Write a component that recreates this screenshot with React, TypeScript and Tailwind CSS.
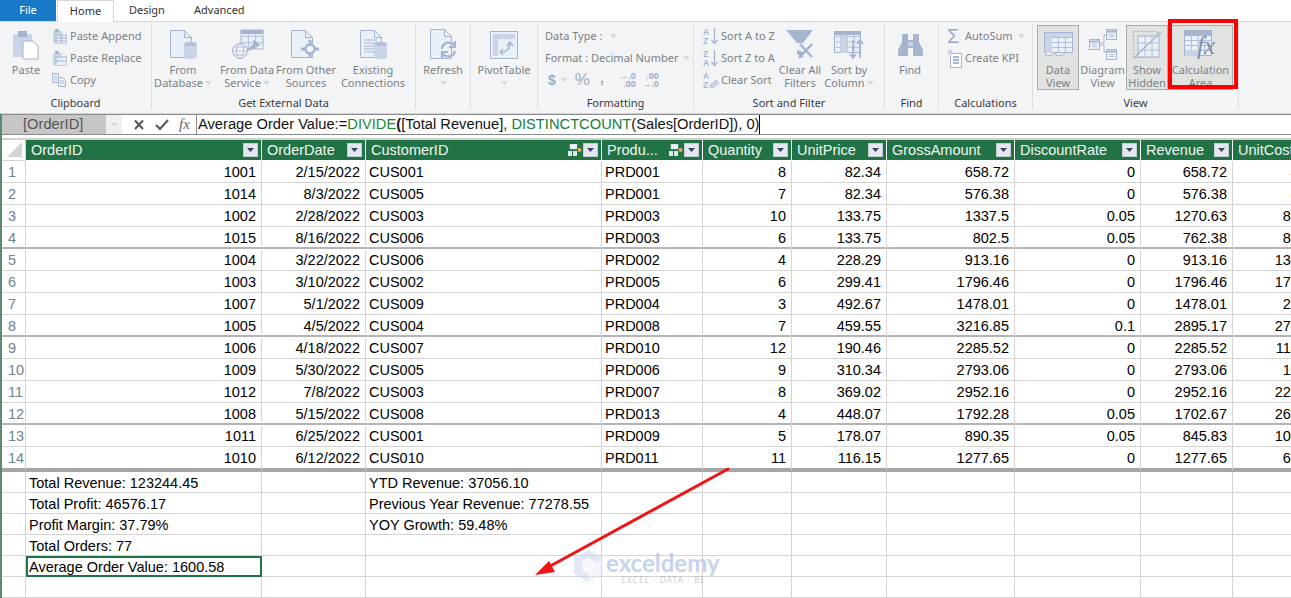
import type { ReactNode } from 'react';

const D = '#a6b4ce';
const M = '#c9d4e7';
const L = '#eaf0f8';

const cols = 'grid grid-cols-[24px_236px_104px_236px_101px_89px_95px_128px_126px_92px_92px]';

const rows = [
  ['1', '1001', '2/15/2022', 'CUS001', 'PRD001', '8', '82.34', '658.72', '0', '658.72', '49.4'],
  ['2', '1014', '8/3/2022', 'CUS005', 'PRD001', '7', '82.34', '576.38', '0', '576.38', '49.4'],
  ['3', '1002', '2/28/2022', 'CUS003', 'PRD003', '10', '133.75', '1337.5', '0.05', '1270.63', '80.25'],
  ['4', '1015', '8/16/2022', 'CUS006', 'PRD003', '6', '133.75', '802.5', '0.05', '762.38', '80.25'],
  ['5', '1004', '3/22/2022', 'CUS006', 'PRD002', '4', '228.29', '913.16', '0', '913.16', '137.37'],
  ['6', '1003', '3/10/2022', 'CUS002', 'PRD005', '6', '299.41', '1796.46', '0', '1796.46', '179.65'],
  ['7', '1007', '5/1/2022', 'CUS009', 'PRD004', '3', '492.67', '1478.01', '0', '1478.01', '29.56'],
  ['8', '1005', '4/5/2022', 'CUS004', 'PRD008', '7', '459.55', '3216.85', '0.1', '2895.17', '275.73'],
  ['9', '1006', '4/18/2022', 'CUS007', 'PRD010', '12', '190.46', '2285.52', '0', '2285.52', '114.28'],
  ['10', '1009', '5/30/2022', 'CUS005', 'PRD006', '9', '310.34', '2793.06', '0', '2793.06', '18.62'],
  ['11', '1012', '7/8/2022', 'CUS003', 'PRD007', '8', '369.02', '2952.16', '0', '2952.16', '221.41'],
  ['12', '1008', '5/15/2022', 'CUS008', 'PRD013', '4', '448.07', '1792.28', '0.05', '1702.67', '268.84'],
  ['13', '1011', '6/25/2022', 'CUS001', 'PRD009', '5', '178.07', '890.35', '0.05', '845.83', '106.84'],
  ['14', '1010', '6/12/2022', 'CUS010', 'PRD011', '11', '116.15', '1277.65', '0', '1277.65', '69.69'],
];

const headers = ['OrderID', 'OrderDate', 'CustomerID', 'Produ...', 'Quantity', 'UnitPrice', 'GrossAmount', 'DiscountRate', 'Revenue', 'UnitCost'];

const measures = [
  ['Total Revenue: 123244.45', 'YTD Revenue: 37056.10'],
  ['Total Profit: 46576.17', 'Previous Year Revenue: 77278.55'],
  ['Profit Margin: 37.79%', 'YOY Growth: 59.48%'],
  ['Total Orders: 77', ''],
  ['Average Order Value: 1600.58', ''],
  ['', ''],
];

function Caret({ className = '' }: { className?: string }) {
  return (
    <svg width="7" height="4" viewBox="0 0 7 4" className={className}>
      <path d="M0 0h7L3.500 4z" fill="#d6d9de" />
    </svg>
  );
}

function Big({ icon, lines, w, active, caret }: { icon: ReactNode; lines: string[]; w: string; active?: boolean; caret?: boolean }) {
  return (
    <div className={`${w} mt-[2px] h-[65px] flex flex-col items-center border whitespace-nowrap ${active ? 'bg-[#e1e3e1] border-[#a9aca9]' : 'border-transparent'}`}>
      <div className="h-[38px] flex items-center justify-center">{icon}</div>
      <div className="leading-[13px] text-center">{lines[0]}</div>
      <div className="leading-[13px] h-[13px] text-center flex items-center gap-[2px]">
        {lines[1] ?? ''}
        {caret && <Caret />}
      </div>
    </div>
  );
}

function Small({ icon, label, caret }: { icon: ReactNode; label: string; caret?: boolean }) {
  return (
    <div className="h-[22px] flex items-center whitespace-nowrap">
      <div className="w-[18px] flex items-center">{icon}</div>
      {label}
      {caret && <Caret className="ml-[5px]" />}
    </div>
  );
}

function Group({ label, w, children }: { label: string; w: string; children: ReactNode }) {
  return (
    <div className={`${w} h-[86px] mt-px flex flex-col border-r border-[#dcdee1]`}>
      <div className="h-[70px] flex">{children}</div>
      <div className="pt-[4px] leading-[12px] text-center text-[#3c3c3c]">{label}</div>
    </div>
  );
}

function TinyTable({ x, y, w, h, c = 3, r = 3 }: { x: number; y: number; w: number; h: number; c?: number; r?: number }) {
  const cw = w / c;
  const rh = h / r;
  return (
    <g>
      <rect x={x} y={y} width={w} height={h} fill={L} stroke={D} />
      {Array.from({ length: c - 1 }, (_, i) => (
        <line key={i} x1={x + cw * (i + 1)} y1={y} x2={x + cw * (i + 1)} y2={y + h} stroke={D} strokeWidth="0.8" />
      ))}
      {Array.from({ length: r - 1 }, (_, i) => (
        <line key={i} x1={x} y1={y + rh * (i + 1)} x2={x + w} y2={y + rh * (i + 1)} stroke={D} strokeWidth="0.8" />
      ))}
    </g>
  );
}

const page = 'M1.500 .5h14l7 7v20h-21z';

function PasteIcon() {
  return (
    <svg width="28" height="30" viewBox="0 0 28 30">
      <rect x="1" y="4" width="19" height="23" fill={M} />
      <rect x="6" y="1" width="9" height="6" fill={D} />
      <path d="M11 11h10l5 5v13H11z" fill="#fff" stroke={D} />
    </svg>
  );
}

function CylDoc({ lined }: { lined?: boolean }) {
  return (
    <svg width="29" height="30" viewBox="0 0 29 30">
      <path d={page} fill={L} stroke={D} />
      <path d="M15.500 .5v7h7" fill="none" stroke={D} />
      {lined && <path d="M5 10h13M5 13h13M5 16h10M5 19h10M5 22h10" stroke={D} />}
      <path d="M15 14c0-3 13-3 13 0v13c0 3-13 3-13 0z" fill={M} />
      <ellipse cx="21.500" cy="14" rx="6.500" ry="2" fill={D} opacity="0.6" />
    </svg>
  );
}

function ServiceIcon() {
  return (
    <svg width="33" height="32" viewBox="0 0 33 32">
      <TinyTable x={10} y={1} w={22} h={19} c={3} r={3} />
      <rect x="10" y="1" width="22" height="4" fill={D} />
      <circle cx="9" cy="22" r="7.500" fill="#f3f4f6" stroke={D} />
      <path d="M1.500 22h15M9 14.500c-5 4-5 11 0 15M9 14.500c5 4 5 11 0 15M3 18h12M3 26h12" fill="none" stroke={D} strokeWidth="0.8" />
      <path d="M18 22c1-5 4-6 8-6M23 12l5 4-5 3z" fill={D} stroke={D} strokeWidth="1.500" />
    </svg>
  );
}

function OtherIcon() {
  return (
    <svg width="32" height="30" viewBox="0 0 32 30">
      <path d={page} fill={L} stroke={D} />
      <path d="M15.500 .5v7h7" fill="none" stroke={D} />
      <circle cx="20" cy="19" r="4.500" fill="#f3f4f6" stroke={D} strokeWidth="2.500" />
      <path d="M20 10v4M20 24v4M11 19h4M25 19h4" stroke={D} strokeWidth="3" />
    </svg>
  );
}

function RefreshIcon() {
  return (
    <svg width="28" height="32" viewBox="0 0 28 32">
      <path d="M1.500 .5h14l7 7v22h-21z" fill={L} stroke={D} />
      <path d="M15.500 .5v7h7" fill="none" stroke={D} />
      <path d="M13 20c0-7 9-8 12-4M26 12v6h-6M26 22c-1 6-9 7-12 3M13 29v-6h6" fill="none" stroke={D} strokeWidth="2.200" />
    </svg>
  );
}

function PivotIcon() {
  return (
    <svg width="28" height="28" viewBox="0 0 28 28">
      <rect x=".5" y=".5" width="27" height="27" fill={L} stroke={D} />
      <rect x="3" y="3" width="22" height="5" fill={M} />
      <rect x="3" y="8" width="5" height="17" fill={M} />
      <path d="M10 21c4 1 9-1 10-8M17 15l3-4 3 4M13 18l-3 3 3 3" fill="none" stroke={D} strokeWidth="1.500" />
    </svg>
  );
}

function SortIcon({ top, bottom, clear }: { top: string; bottom: string; clear?: boolean }) {
  return (
    <svg width="16" height="18" viewBox="0 0 16 18">
      <text x="0" y="8" fontSize="8.500" fontWeight="700" fill={D} fontFamily="Liberation Sans, sans-serif">{top}</text>
      <text x="0" y="17" fontSize="8.500" fontWeight="700" fill={D} fontFamily="Liberation Sans, sans-serif">{bottom}</text>
      {clear ? (
        <path d="M7 14l6-5 3 3-6 5H7z" fill={M} stroke={D} strokeWidth="0.600" />
      ) : (
        <path d="M11.500 1v15M8.500 13l3 3.500 3-3.500" fill="none" stroke={D} strokeWidth="1.200" />
      )}
    </svg>
  );
}

function ClearFilterIcon() {
  return (
    <svg width="28" height="30" viewBox="0 0 28 30">
      <path d="M0 0h27l-10 13v15l-6-4V13z" fill={D} />
      <path d="M11 13l6 0v9l-6-2z" fill={L} />
      <path d="M14 14l12 13M26 14L13 28" stroke={D} strokeWidth="2.500" />
    </svg>
  );
}

function SortColumnIcon() {
  return (
    <svg width="31" height="30" viewBox="0 0 31 30">
      <TinyTable x={.5} y={1.500} w={26} h={21} c={4} r={4} />
      <rect x="0" y="1" width="27" height="4" fill={D} />
      <rect x="7" y="5" width="6.500" height="18" fill={M} />
      <path d="M19 10v18M16 24l3 4 3-4M26 28V10M23 14l3-4 3 4" fill="none" stroke={D} strokeWidth="1.800" />
    </svg>
  );
}

function FindIcon() {
  return (
    <svg width="27" height="24" viewBox="0 0 27 24">
      <path d="M5 1h6v6h5V1h6v8l4 8v6H16v-8h-5v8H1v-6l4-8z" fill={D} />
      <path d="M11 9h5v4h-5z" fill={M} />
    </svg>
  );
}

function KpiIcon() {
  return (
    <svg width="15" height="19" viewBox="0 0 15 19">
      <rect x="3.500" y="4.500" width="11" height="14" fill="#fff" stroke={D} />
      <path d="M6 8h6M6 11h6M6 14h6" stroke={D} strokeWidth="2" />
      <circle cx="3" cy="3" r="2.500" fill={M} />
    </svg>
  );
}

function DataViewIcon() {
  return (
    <svg width="29" height="26" viewBox="0 0 29 26">
      <TinyTable x={.5} y={.5} w={28} h={20} c={4} r={4} />
      <rect x="1" y="1" width="27" height="4" fill={M} />
      <rect x="1" y="5" width="7" height="16" fill={M} />
      <path d="M2 21v3l6-1 3-2M12 21v3l6-1 3-2" fill="#f3f4f6" stroke={D} />
    </svg>
  );
}

function DiagramIcon() {
  return (
    <svg width="28" height="31" viewBox="0 0 28 31">
      <path d="M11 14h4V6h3M11 16h4v7h3" fill="none" stroke={D} />
      <rect x=".5" y="10.500" width="10" height="10" fill={L} stroke={D} />
      <rect x="17.500" y=".5" width="10" height="10" fill={L} stroke={D} />
      <rect x="17.500" y="20.500" width="10" height="10" fill={L} stroke={D} />
      <path d="M.5 12.500h10M17.500 2.500h10M17.500 22.500h10" stroke={D} strokeWidth="2" />
      <path d="M3 15.500h5M3 17.500h5M20 5.500h5M20 7.500h5M20 25.500h5M20 27.500h5" stroke={D} strokeWidth="0.700" />
    </svg>
  );
}

function HiddenIcon() {
  return (
    <svg width="29" height="28" viewBox="0 0 29 28">
      <rect x=".5" y=".5" width="24" height="26" fill="none" stroke={D} strokeDasharray="2 1.500" />
      <TinyTable x={5} y={5} w={21} h={21} c={3} r={3} />
      <path d="M1 27L28 1" stroke={D} strokeWidth="1.200" />
    </svg>
  );
}

function CalcIcon() {
  return (
    <svg width="33" height="30" viewBox="0 0 33 30">
      <TinyTable x={.5} y={.5} w={27} h={25} c={4} r={5} />
      <rect x="1" y="1" width="27" height="5" fill={D} />
      <rect x="1" y="20" width="14" height="6" fill={M} />
      <text x="13" y="24" fontSize="25" fontStyle="italic" fill="#7f8eac" fontFamily="Liberation Serif, serif">fx</text>
    </svg>
  );
}

function PasteSmall({ replace }: { replace?: boolean }) {
  return (
    <svg width="15" height="15" viewBox="0 0 15 15">
      <rect x="1" y="2" width="9" height="12" fill={M} />
      <rect x="3" y="0" width="4" height="3" fill={D} />
      <rect x="4" y="6" width="11" height="9" fill={L} stroke={D} />
      <path d={replace ? 'M4 10h11' : 'M4 9h11M4 12h11M9 6v9'} stroke={D} />
    </svg>
  );
}

function CopySmall() {
  return (
    <svg width="14" height="14" viewBox="0 0 14 14">
      <path d="M.5 .5h6v9h-6zM6.500 4.500h4l3 3v6h-7z" fill={L} stroke={D} />
      <path d="M2 3h3M2 5h3M2 7h3M8 8h4M8 10h4" stroke={D} strokeWidth="0.800" />
    </svg>
  );
}

function FilterButton() {
  return (
    <div className="w-[15px] h-[14px] flex items-center justify-center bg-[#e4e7f0] border border-[#c5cbd9] shrink-0">
      <svg width="7" height="4" viewBox="0 0 7 4">
        <path d="M0 0h7L3.500 4z" fill="#3c4560" />
      </svg>
    </div>
  );
}

function HierarchyIcon() {
  return (
    <svg width="14" height="13" viewBox="0 0 14 13" className="shrink-0">
      <rect x="2" y="0" width="7" height="5" fill="#f1f4f8" stroke="#b9c6d6" strokeWidth="0.600" />
      <rect x="0" y="7" width="4" height="5" fill="#e3e9f1" />
      <rect x="5" y="7" width="4" height="5" fill="#e3e9f1" />
      <circle cx="11.500" cy="6" r="2" fill="#e9a64f" />
    </svg>
  );
}

export default function App() {
  return (
    <div className="relative w-[1291px] h-[598px] overflow-hidden bg-white text-black font-['Liberation_Sans',sans-serif]">
      {/* tabs */}
      <div className="h-[21px] flex text-[11px] leading-[19px] text-[#333] font-['Noto_Sans',sans-serif]">
        <div className="w-[56px] bg-[#1a78c8] text-white text-center">File</div>
        <div className="w-[57px] ml-px bg-white text-center border-x border-t border-[#d8d8d8] relative z-10 h-[22px]">Home</div>
        <div className="pl-[15px] w-[80px]">Design</div>
        <div>Advanced</div>
      </div>

      {/* ribbon */}
      <div className="h-[93px] bg-[#f3f4f6] border-y border-[#d4d6d8] flex text-[11px] text-[#7d8185] font-['Noto_Sans',sans-serif]">
        <Group label="Clipboard" w="w-[152px]">
          <Big w="w-[52px]" icon={<PasteIcon />} lines={['Paste']} />
          <div className="pt-[2px]">
            <Small icon={<PasteSmall />} label="Paste Append" />
            <Small icon={<PasteSmall replace />} label="Paste Replace" />
            <Small icon={<CopySmall />} label="Copy" />
          </div>
        </Group>
        <Group label="Get External Data" w="w-[264px]">
          <Big w="w-[62px]" icon={<CylDoc />} lines={['From', 'Database']} caret />
          <Big w="w-[66px]" icon={<ServiceIcon />} lines={['From Data', 'Service']} caret />
          <Big w="w-[52px]" icon={<OtherIcon />} lines={['From Other', 'Sources']} />
          <Big w="w-[82px]" icon={<CylDoc lined />} lines={['Existing', 'Connections']} />
        </Group>
        <Group label="" w="w-[55px]">
          <Big w="w-[54px]" icon={<RefreshIcon />} lines={['Refresh', '']} caret />
        </Group>
        <Group label="" w="w-[67px]">
          <Big w="w-[66px]" icon={<PivotIcon />} lines={['PivotTable', '']} caret />
        </Group>
        <Group label="Formatting" w="w-[156px]">
          <div className="pt-[2px] pl-[7px]">
            <div className="h-[22px] flex items-center">Data Type :<Caret className="ml-[7px]" /></div>
            <div className="h-[22px] flex items-center">Format : Decimal Number<Caret className="ml-[5px]" /></div>
            <div className="h-[22px] flex items-center text-[#a0abc0] font-bold pl-[3px] font-['Liberation_Sans',sans-serif]">
              <span className="text-[14px]">$</span>
              <Caret className="ml-[4px]" />
              <span className="ml-[8px] text-[17px] font-normal">%</span>
              <span className="ml-[10px] text-[14px] -mt-[4px]">,</span>
              <span className="ml-[12px] text-[9px] leading-[8px] w-[20px] text-right">→.0<br />.00</span>
              <span className="ml-[3px] text-[9px] leading-[8px] w-[20px] text-right">.00<br />→.0</span>
            </div>
          </div>
        </Group>
        <Group label="Sort and Filter" w="w-[191px]">
          <div className="pt-[2px] pl-[9px] w-[88px]">
            <Small icon={<SortIcon top="A" bottom="Z" />} label="Sort A to Z" />
            <Small icon={<SortIcon top="Z" bottom="A" />} label="Sort Z to A" />
            <Small icon={<SortIcon top="A" bottom="Z" clear />} label="Clear Sort" />
          </div>
          <Big w="w-[36px]" icon={<ClearFilterIcon />} lines={['Clear All', 'Filters']} />
          <div className="w-[7px]" />
          <Big w="w-[48px]" icon={<SortColumnIcon />} lines={['Sort by', 'Column']} caret />
        </Group>
        <Group label="Find" w="w-[54px]">
          <Big w="w-[50px]" icon={<FindIcon />} lines={['Find']} />
        </Group>
        <Group label="Calculations" w="w-[94px]">
          <div className="pt-[2px] pl-[8px]">
            <Small icon={<span className="text-[20px] leading-[20px] text-[#9aa8c2] font-['Liberation_Sans',sans-serif]">Σ</span>} label="AutoSum" caret />
            <Small icon={<KpiIcon />} label="Create KPI" />
          </div>
        </Group>
        <Group label="View" w="w-[206px]">
          <div className="w-[4px]" />
          <Big w="w-[42px]" active icon={<DataViewIcon />} lines={['Data', 'View']} />
          <Big w="w-[47px]" icon={<DiagramIcon />} lines={['Diagram', 'View']} />
          <Big w="w-[42px]" active icon={<HiddenIcon />} lines={['Show', 'Hidden']} />
          <Big w="w-[65px]" active icon={<CalcIcon />} lines={['Calculation', 'Area']} />
        </Group>
      </div>

      <div className="border-l-2 border-[#5b8a70]">
        {/* formula bar */}
        <div className="h-[21px] flex border-y border-[#8c8c8c] text-[14.7px] leading-[19px]">
          <div className="w-[104px] bg-[#c6c6c6] text-[#555] pl-[21px]">[OrderID]</div>
          <div className="w-[16px] bg-[#efefef] flex items-center justify-center"><Caret /></div>
          <div className="w-[75px] flex items-center border-r border-[#8c8c8c]">
            <svg width="14" height="12" viewBox="0 0 14 12" className="ml-[11px]">
              <path d="M2 1.500l8 8.500M10 1.500L2 10" stroke="#555" strokeWidth="2" />
            </svg>
            <svg width="15" height="12" viewBox="0 0 15 12" className="ml-[8px]">
              <path d="M1 6l4 4 8-9" fill="none" stroke="#555" strokeWidth="2" />
            </svg>
            <span className="ml-[9px] font-['Liberation_Serif',serif] italic text-[15px] text-[#666]">fx</span>
          </div>
          <div className="pl-px whitespace-nowrap border-r border-black h-[19px] text-[#111]">
            Average Order Value:=<span className="text-[#1a8a2e]">DIVIDE</span><span className="font-bold">(</span>[Total Revenue], <span className="text-[#12803c]">DISTINCTCOUNT</span>(Sales[OrderID]), 0)
          </div>
        </div>

        <div className="h-[3px]" />
        <div className="h-[2px] bg-[#d0d0d0]" />

        {/* table header */}
        <div className={`${cols} h-[21px] text-[14.5px] text-[#f1f5f2]`}>
          <div className="flex items-end justify-end pr-[3px] pb-[3px] border-r border-b border-[#d4d4d4]">
            <svg width="15" height="15" viewBox="0 0 15 15">
              <path d="M15 0v15H0z" fill="#d4d4d4" />
            </svg>
          </div>
          {headers.map((h, i) => (
            <div key={h} className="bg-[#217346] border-r border-b border-white flex items-center pl-[5px] pr-[3px] gap-[1px] overflow-hidden whitespace-nowrap">
              <span className="flex-1 pt-[2px]">{h}</span>
              {(i === 2 || i === 3) && <HierarchyIcon />}
              {i < 9 && <FilterButton />}
            </div>
          ))}
        </div>

        {/* data rows */}
        {rows.map((r, ri) => {
          const last = ri === rows.length - 1;
          const thick = ri === 3 || ri === 7 || ri === 11;
          return (
            <div
              key={r[0]}
              className={`${cols} text-[14.5px] leading-[23px] ${last ? 'h-[25px] border-b-4 border-[#a6a6a6]' : thick ? 'h-[22px] border-b-2 border-[#b4b4b4]' : 'h-[22px] border-b border-[#d4d4d4]'}`}
            >
              {r.map((v, i) => (
                <div
                  key={i}
                  className={`border-r border-[#d4d4d4] whitespace-nowrap ${i === 0 ? 'pl-[6px] text-[#6f8290]' : i === 3 || i === 4 ? 'pl-[3px]' : 'pr-[5px] text-right'}`}
                >
                  {v}
                </div>
              ))}
            </div>
          );
        })}

        {/* measure grid */}
        {measures.map((m, ri) => (
          <div key={ri} className={`${cols} h-[21px] border-b border-[#d4d4d4] text-[14.5px] leading-[23px]`}>
            {Array.from({ length: 11 }, (_, i) => {
              if (i === 1 && ri === 4) {
                return (
                  <div key={i} className="h-[21px] border-2 border-[#217346] pl-px leading-[19px] whitespace-nowrap">
                    {m[0]}
                  </div>
                );
              }
              return (
                <div key={i} className="border-r border-[#d4d4d4] pl-[3px] whitespace-nowrap">
                  {i === 1 ? m[0] : i === 3 ? m[1] : ''}
                </div>
              );
            })}
          </div>
        ))}
      </div>

      {/* red highlight over Calculation Area */}
      <div className="absolute left-[1168px] top-[19px] w-[70px] h-[70px] border-[4px] border-[#ff0000]" />

      {/* watermark */}
      <div className="absolute left-[574px] top-[550px] flex items-start opacity-50 pointer-events-none">
        <svg width="29" height="32" viewBox="0 0 29 32">
          <path d="M14.500 0L29 8v16l-14.500 8L0 24V8z" fill="#c7d3ea" />
          <path d="M14.500 16L29 8v16l-14.500 8z" fill="#e6ebf5" />
          <path d="M8 12l6.500-4 6.500 4v8l-6.500 4L8 20z" fill="#f2f5fa" />
        </svg>
        <div className="ml-[3px] text-center">
          <div className="text-[24px] leading-[25px] font-bold text-[#8fa9e0] font-['Lato',sans-serif]">exceldemy</div>
          <div className="mt-px text-[8px] leading-[8px] tracking-[1.2px] text-[#999] font-['Noto_Sans',sans-serif]">EXCEL · DATA · BI</div>
        </div>
      </div>

      {/* red arrow */}
      <svg className="absolute left-[530px] top-[464px]" width="204" height="116" viewBox="0 0 204 116">
        <path d="M198 5L13 106" stroke="#f01414" strokeWidth="3" strokeLinecap="round" />
        <path d="M5 111L19 97l6 11z" fill="#f01414" />
      </svg>
    </div>
  );
}
